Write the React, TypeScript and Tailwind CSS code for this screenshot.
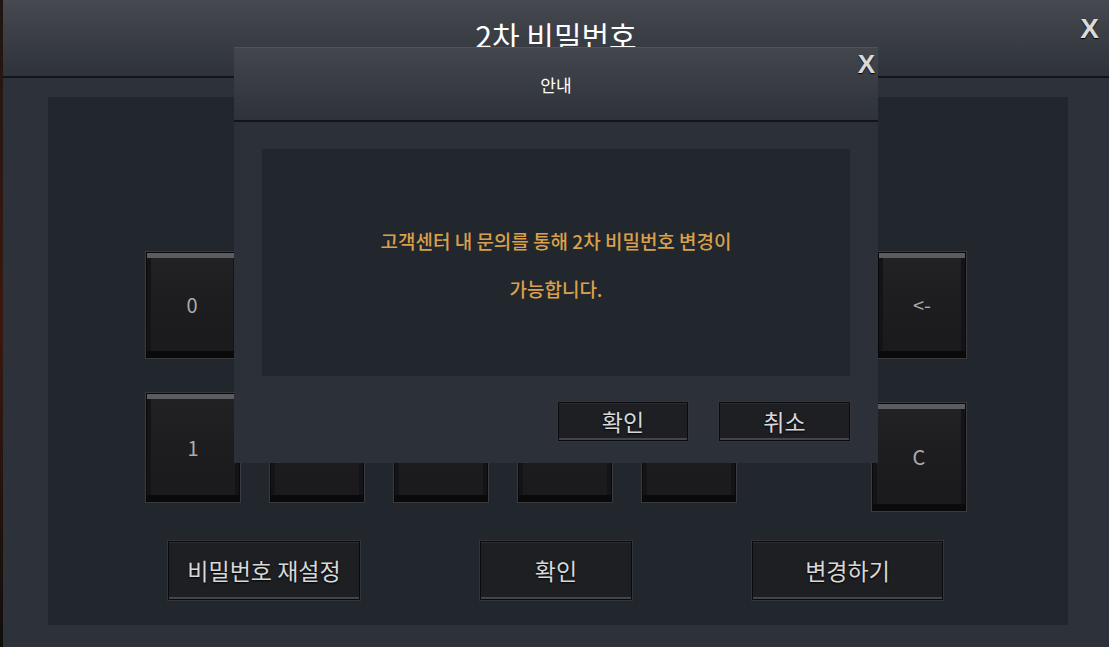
import React from "react";

const kr = { fontFamily: '"Noto Sans CJK KR", "Noto Sans", sans-serif' };

const keyShadow =
  "shadow-[0_0_0_1px_#3a3b42,inset_0_5px_0_#5b5c60,inset_0_-6px_0_#0a0a0b,inset_4px_0_0_#141416,inset_-4px_0_0_#141416]";

const Key = ({ label, className = "" }: { label?: string; className?: string }) => (
  <div
    className={`flex items-center justify-center border border-[#08080a] bg-gradient-to-b from-[#222224] via-[#1d1d1f] to-[#1a1a1c] text-[20px] text-[#acacae] ${keyShadow} ${className}`}
    style={kr}
  >
    {label}
  </div>
);

const Btn = ({ label, className = "" }: { label: string; className?: string }) => (
  <div
    className={`flex items-center justify-center border border-[#0b0b0d] bg-[#1d1f23] text-[#d8d8d8] [text-shadow:0_1px_2px_#000] shadow-[0_0_0_1px_#34353c,inset_0_1px_0_#2c2d31,inset_0_-2px_0_#44444f] ${className}`}
    style={kr}
  >
    {label}
  </div>
);

const CloseX = ({ className = "" }: { className?: string }) => (
  <span
    className={`absolute font-bold leading-none text-[#dadada] [text-shadow:0_1px_1px_#000] ${className}`}
    style={{ fontFamily: '"Liberation Sans", Arial, sans-serif' }}
  >
    X
  </span>
);

export default function App() {
  return (
    <div className="relative flex h-[647px] w-[1109px] overflow-hidden bg-[#2d3139]">
      {/* game background strip at the left edge */}
      <div className="w-[3px] bg-gradient-to-b from-[#1e1610] via-[#3a1810] to-[#100e0b]" />

      <div className="flex flex-1 flex-col bg-[#2d3139]">
        <header className="relative flex h-[78px] justify-center border-b-2 border-[#141518] bg-gradient-to-b from-[#46494f] to-[#2e323a]">
          <h1 className="pt-[13px] text-[30px] text-white" style={kr}>
            2차 비밀번호
          </h1>
          <CloseX className="right-[10px] top-[15px] text-[28px]" />
        </header>

        <div className="flex-1 pb-[22px] pl-[45px] pr-[41px] pt-[19px]">
          <div className="flex h-full flex-col bg-[#22262d]">
            <div className="mt-[155px] flex h-[106px] pl-[98px] pr-[102px]">
              <Key label="0" className="h-[106px] w-[92px]" />
              <Key label="<-" className="ml-auto h-[106px] w-[88px]" />
            </div>

            <div className="mt-[35px] flex items-start pl-[98px] pr-[102px]">
              <div className="flex gap-[30px]">
                <Key label="1" className="h-[109px] w-[94px]" />
                <Key className="h-[109px] w-[94px]" />
                <Key className="h-[109px] w-[94px]" />
                <Key className="h-[109px] w-[94px]" />
                <Key className="h-[109px] w-[94px]" />
              </div>
              <Key label="C" className="ml-auto mt-[10px] h-[108px] w-[94px]" />
            </div>

            <div className="mb-[25px] mt-auto flex gap-[120px] pl-[120px] text-[23px]">
              <Btn label="비밀번호 재설정" className="h-[59px] w-[192px]" />
              <Btn label="확인" className="h-[59px] w-[152px]" />
              <Btn label="변경하기" className="h-[59px] w-[191px]" />
            </div>
          </div>
        </div>
      </div>

      {/* notice dialog */}
      <div className="absolute left-[234px] top-[48px] flex h-[415px] w-[644px] flex-col bg-[#2c3039] shadow-[0_-1px_0_#50535a]">
        <div className="relative flex h-[74px] items-center justify-center border-b-2 border-[#141518] bg-gradient-to-b from-[#43464d] to-[#2e323a]">
          <span className="pt-[2px] text-[17px] text-white" style={kr}>
            안내
          </span>
          <CloseX className="right-[3px] top-[3px] text-[26px]" />
        </div>
        <div className="flex flex-1 flex-col px-[28px] pb-[22px] pt-[27px]">
          <div
            className="flex h-[227px] flex-col items-center justify-center bg-[#22262d] pt-[4px] text-[19px] font-medium leading-[48px] text-[#d9a04b]"
            style={kr}
          >
            <p>고객센터 내 문의를 통해 2차 비밀번호 변경이</p>
            <p>가능합니다.</p>
          </div>
          <div className="mt-auto flex justify-end gap-[31px] text-[23px]">
            <Btn label="확인" className="h-[39px] w-[130px]" />
            <Btn label="취소" className="h-[39px] w-[131px]" />
          </div>
        </div>
      </div>
    </div>
  );
}
